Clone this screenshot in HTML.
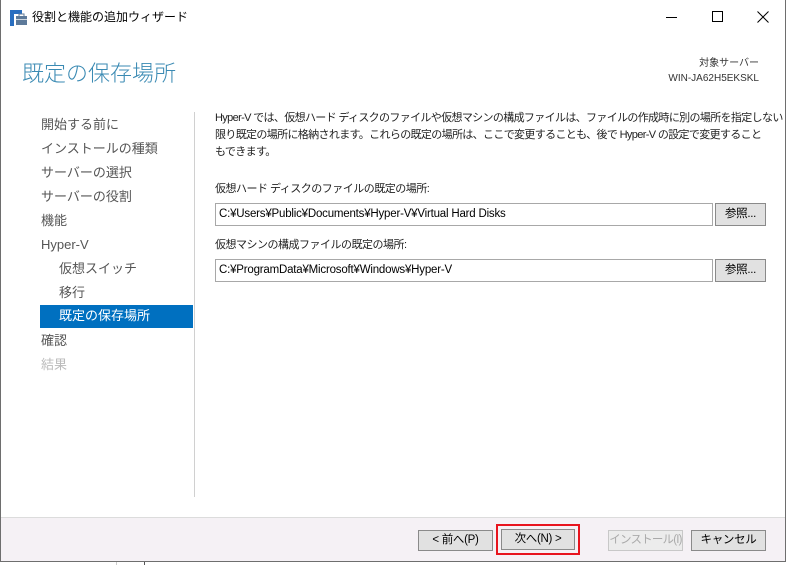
<!DOCTYPE html>
<html><head><meta charset="utf-8"><style>
*{margin:0;padding:0;box-sizing:border-box}
body{width:790px;height:565px;background:#fff;position:relative;overflow:hidden;font-family:"Liberation Sans","Noto Sans CJK JP",sans-serif;font-size:12px;color:#000}
.a{position:absolute;white-space:nowrap}
.win{position:absolute;left:0;top:0;width:786px;height:562px;border:1px solid #6e6e6e;border-top:none;background:#fff}
.nav{position:absolute;left:40px;font-size:13px;color:#555;height:24px;line-height:24px}
.inp{position:absolute;left:214px;width:498px;height:23px;border:1px solid #a8a8a8;line-height:21px;padding-left:3px;font-size:11.5px;background:#fff;letter-spacing:-0.2px}
.btn{position:absolute;height:21px;border:1px solid #8a8a8a;background:#e1e1e1;text-align:center;line-height:19px;font-size:11.5px;white-space:nowrap;overflow:hidden;letter-spacing:-0.3px}
</style></head><body>
<div class="a" style="left:0;top:0;width:352px;height:2px;background:#1f5fa8"></div>
<div class="win">
<svg class="a" style="left:9px;top:10px" width="18" height="16" viewBox="0 0 18 16"><rect x="0" y="0" width="4" height="16" fill="#2a6fc0"/><rect x="0" y="0" width="12" height="4" fill="#2a6fc0"/><rect x="6" y="6" width="11" height="9" fill="#5d7a9a"/><rect x="9" y="4" width="5" height="3" fill="none" stroke="#5d7a9a"/><rect x="6" y="9" width="11" height="1" fill="#cfd8e0"/></svg>
<div class="a" style="left:31px;top:8px;font-size:12px">役割と機能の追加ウィザード</div>
<div class="a" style="left:665px;top:17px;width:11px;height:1px;background:#000"></div>
<div class="a" style="left:711px;top:11px;width:11px;height:11px;border:1px solid #000"></div>
<svg class="a" style="left:756px;top:11px" width="12" height="12"><path d="M0.5 0.5L11.5 11.5M11.5 0.5L0.5 11.5" stroke="#000" stroke-width="1"/></svg>
<div class="a" style="left:21px;top:56px;font-size:22px;color:#3a8ab3;font-weight:300">既定の保存場所</div>
<div class="a" style="right:26px;top:56px;font-size:10px;color:#333;text-align:right;line-height:15px">対象サーバー<br>WIN-JA62H5EKSKL</div>
<div class="nav" style="top:113px">開始する前に</div>
<div class="nav" style="top:137px">インストールの種類</div>
<div class="nav" style="top:161px">サーバーの選択</div>
<div class="nav" style="top:185px">サーバーの役割</div>
<div class="nav" style="top:209px">機能</div>
<div class="nav" style="top:233px">Hyper-V</div>
<div class="nav" style="top:257px;left:58px">仮想スイッチ</div>
<div class="nav" style="top:281px;left:58px">移行</div>
<div class="a" style="left:39px;top:305px;width:153px;height:23px;background:#0070c0"></div>
<div class="nav" style="top:304px;left:58px;color:#fff">既定の保存場所</div>
<div class="nav" style="top:329px">確認</div>
<div class="nav" style="top:353px;color:#bbb">結果</div>
<div class="a" style="left:193px;top:112px;width:1px;height:385px;background:#d0d0d0"></div>
<div class="a" style="left:214px;top:110px;font-size:11px;line-height:17px;color:#222;letter-spacing:-0.65px">Hyper-V では、仮想ハード ディスクのファイルや仮想マシンの構成ファイルは、ファイルの作成時に別の場所を指定しない<br>限り既定の場所に格納されます。これらの既定の場所は、ここで変更することも、後で Hyper-V の設定で変更すること<br>もできます。</div>
<div class="a" style="left:214px;top:180px;color:#222;font-size:11px;letter-spacing:-0.5px">仮想ハード ディスクのファイルの既定の場所:</div>
<div class="inp" style="top:203px">C:¥Users¥Public¥Documents¥Hyper-V¥Virtual Hard Disks</div>
<div class="btn" style="left:714px;top:203px;width:51px;height:23px;line-height:21px">参照...</div>
<div class="a" style="left:214px;top:236px;color:#222;font-size:11px;letter-spacing:-0.5px">仮想マシンの構成ファイルの既定の場所:</div>
<div class="inp" style="top:259px">C:¥ProgramData¥Microsoft¥Windows¥Hyper-V</div>
<div class="btn" style="left:714px;top:259px;width:51px;height:23px;line-height:21px">参照...</div>
<div class="a" style="left:0;top:517px;width:784px;height:44px;background:#f5f1f5;border-top:1px solid #dcdcdc"></div>
<div class="btn" style="left:417px;top:530px;width:75px">&lt; 前へ(P)</div>
<div class="a" style="left:495px;top:524px;width:84px;height:31px;border:2px solid #e8141e"></div>
<div class="btn" style="left:500px;top:529px;width:74px">次へ(N) &gt;</div>
<div class="btn" style="left:607px;top:530px;width:75px;color:#aaa;border-color:#c8c8c8;background:#ececec;letter-spacing:-0.8px">インストール(I)</div>
<div class="btn" style="left:690px;top:530px;width:75px">キャンセル</div>
</div>
<div class="a" style="left:116px;top:562px;width:1px;height:3px;background:#ccc"></div>
<div class="a" style="left:144px;top:562px;width:1px;height:3px;background:#555"></div>
</body></html>
